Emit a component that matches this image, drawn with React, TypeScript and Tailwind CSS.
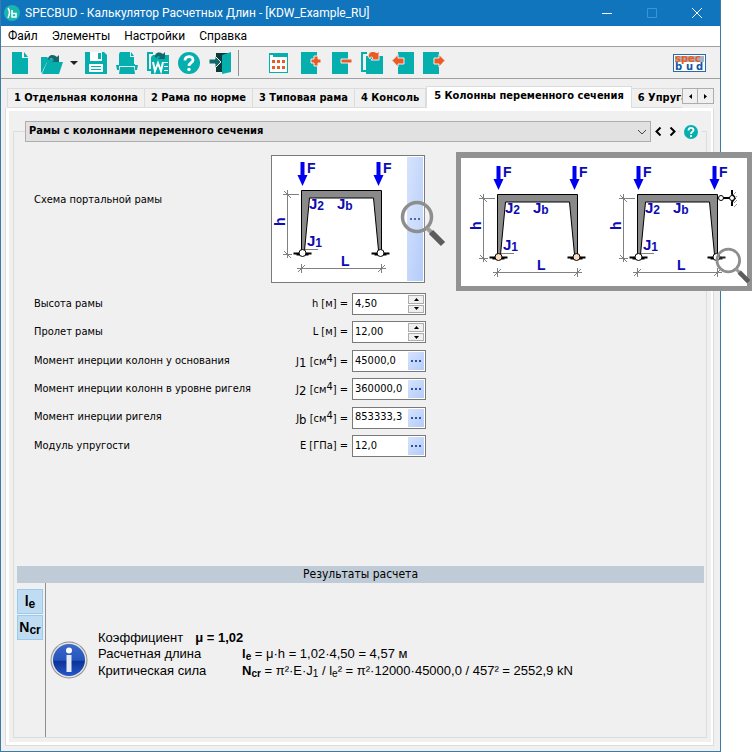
import { useState } from 'react';
import type { ReactNode } from 'react';

const TEAL = '#04afae';
const ORANGE = '#ee5a24';

const tabs = [
  '1 Отдельная колонна',
  '2 Рама по норме',
  '3 Типовая рама',
  '4 Консоль',
  '5 Колонны переменного сечения',
  '6 Упругая опора',
];

type Field = {
  id: string;
  label: string;
  symbol: ReactNode;
  value: string;
  spinner?: boolean;
};

const fields: Field[] = [
  { id: 'h', label: 'Высота рамы', symbol: 'h [м] =', value: '4,50', spinner: true },
  { id: 'l', label: 'Пролет рамы', symbol: 'L [м] =', value: '12,00', spinner: true },
  { id: 'j1', label: 'Момент инерции колонн у основания', symbol: <Inertia index="1" />, value: '45000,0' },
  { id: 'j2', label: 'Момент инерции колонн в уровне ригеля', symbol: <Inertia index="2" />, value: '360000,0' },
  { id: 'jb', label: 'Момент инерции ригеля', symbol: <Inertia index="b" />, value: '853333,3' },
  { id: 'e', label: 'Модуль упругости', symbol: 'E [ГПа] =', value: '12,0' },
];

function Inertia({ index }: { index: string }) {
  return (
    <>
      J<span className="relative top-0.5 text-[13px]">{index}</span> [см
      <span className="relative -top-[3px]">4</span>] =
    </>
  );
}

/* ---------- frame drawing ---------- */

function Load({ x }: { x: number }) {
  return (
    <>
      <path d={`M${x - 1.5} 7h4v13h3l-5 11-5-11h3z`} fill="#0000f0" />
      <text x={x + 5} y="18" fontSize="14">F</text>
    </>
  );
}

function Support({ x, fill }: { x: number; fill: string }) {
  return (
    <>
      <path d={`M${x - 9} 98.5h18M${x - 6} 99.5h12`} stroke="#000" strokeWidth="2" />
      <circle cx={x} cy="98" r="3.5" fill={fill} stroke="#000" />
    </>
  );
}

function PortalFrame({ hinge = '#fff' }: { hinge?: string }) {
  return (
    <g fill="#0b0bb4" fontFamily="Liberation Sans, sans-serif" fontWeight="bold">
      <Load x={31} />
      <Load x={107} />
      <path
        d="M30.5 35.5h80v60h-3l-5-52.500h-64l-5 52.500h-3z"
        fill="#8a8a8a"
        stroke="#000"
      />
      <Support x={31.5} fill={hinge} />
      <Support x={109.5} fill={hinge} />
      <g stroke="#808080" fill="none">
        <path d="M16.500 35v68M12 39.500h16M12 99.500h9M13 36l7 7M13 96l7 7" />
        <path d="M26 113.500h89M30.500 109v9M110.500 109v9M27 117l7-7M107 117l7-7" />
        <path d="M34 94.500h13" />
      </g>
      <text x="38" y="54" fontSize="15">J<tspan fontSize="12" dy="1">2</tspan></text>
      <text x="66" y="54" fontSize="15">J<tspan fontSize="12" dy="1">b</tspan></text>
      <text x="36" y="91" fontSize="15">J<tspan fontSize="12" dy="1">1</tspan></text>
      <text x="70" y="111" fontSize="14">L</text>
      <text x="-71" y="14" fontSize="14" transform="rotate(-90)">h</text>
    </g>
  );
}

function Magnifier({ className }: { className: string }) {
  return (
    <svg className={className} viewBox="0 0 46 47" aria-hidden="true">
      <circle cx="17" cy="17" r="14.5" fill="#fff" fillOpacity="0.15" stroke="#8e8e8e" strokeWidth="3.500" />
      <path d="M27 28l5 5" stroke="#9c9c9c" strokeWidth="4" />
      <path d="M31 32l12 12" stroke="#5c5c5c" strokeWidth="6" />
    </svg>
  );
}

/* ---------- toolbar ---------- */

function ToolButton({ label, width = 'w-[22px]', children }: { label: string; width?: string; children: ReactNode }) {
  return (
    <button type="button" aria-label={label} className={`${width} h-[22px] shrink-0`}>
      <svg className="h-[22px] w-full" viewBox={width === 'w-[16px]' ? '0 0 16 22' : '0 0 22 22'} fill={TEAL} aria-hidden="true">
        {children}
      </svg>
    </button>
  );
}

function HelpMark({ className }: { className: string }) {
  return (
    <svg className={className} viewBox="0 0 22 22" fill="none" aria-hidden="true">
      <circle cx="11" cy="11" r="11" fill={TEAL} />
      <path d="M7 8.500c0-5 8-5 8-.500 0 3-4 2.500-4 6" stroke="#fff" strokeWidth="2.800" />
      <circle cx="11" cy="17.500" r="1.700" fill="#fff" />
    </svg>
  );
}

function Toolbar() {
  return (
    <div className="flex h-8 items-center border-b border-[#a0a0a0] pl-[11px] pr-3.5">
      <ToolButton label="Новый" width="w-[16px]">
        <path d="M0 0h10v6h6v16H0zM12 0l4 5h-4z" />
      </ToolButton>
      <div className="ml-[13px] flex items-center">
        <ToolButton label="Открыть">
          <path d="M0 5h6l2 2h7v3H6L2 18l-1 3-1-1z" />
          <path d="M6 10h16l-4 12H1z" />
          <path d="M7 8c0-6 6-6 9-3l2-2v7h-7l2-2c-2-2-3-2-6 0z" fill="#13686b" />
        </ToolButton>
        <button type="button" aria-label="Последние файлы" className="ml-1.5 h-[22px] w-2.5">
          <svg className="h-[22px] w-2.5" viewBox="0 0 10 22" aria-hidden="true">
            <path d="M1 9h8l-4 4z" fill="#222" />
          </svg>
        </button>
      </div>
      <div className="ml-1.5 flex gap-[9px]">
        <ToolButton label="Сохранить">
          <path d="M0 0h19l3 3v19H0z" />
          <path d="M5 0h12v9H5zM4 12h14v8H4z" fill="#fff" />
          <path d="M13 1h3v6h-3zM6 14h10v1H6zM6 17h10v1H6z" />
        </ToolButton>
        <ToolButton label="Печать">
          <path d="M4 0h10v5h4v7H3V2zM15 0l3 4h-3zM3 12h16v2H3zM0 13h3v5H1zM22 13h-3v5h2zM4 15h14l1 7H3z" />
        </ToolButton>
        <ToolButton label="Экспорт в Word">
          <path d="M0 0h6v2H2v15h3v2H0zM6 3h16v19H4V5z" />
          <path d="M8 5c0-6 6-5 8-3l2-2v7h-7l2-2c-2-2-3-1-3 1z" fill="#13686b" />
          <path d="M6 10l2 9 3-8 3 8 2-9" fill="none" stroke="#fff" strokeWidth="2" />
          <path d="M17 10h4v1h-4zM17 14h4v1h-4zM17 18h4v1h-4z" fill="#fff" />
        </ToolButton>
        <button type="button" aria-label="Помощь" className="size-[22px]">
          <HelpMark className="size-[22px]" />
        </button>
        <ToolButton label="Выход">
          <path d="M7 1h15v19H7z" fill="#0d3b3a" />
          <path d="M13 3l9-3v20l-9 2z" />
          <path d="M0 7h6V4l6 6-6 6v-4H0z" fill="#13686b" stroke="#f0f0f0" />
        </ToolButton>
      </div>
      <div className="ml-[7px] h-[26px] w-px bg-[#909090]" />
      <div className="ml-[29px] flex gap-[9px]">
        <ToolButton label="Таблица">
          <path d="M1 1h19v20H1z" />
          <path d="M2 5h17v15H2zM2 3h3v2H2z" fill="#fff" />
          <path d="M4 8h3v3H4zM9 8h3v3H9zM14 8h3v3h-3zM4 14h3v3H4zM9 14h3v3H9zM14 14h3v3h-3z" fill={ORANGE} />
        </ToolButton>
        <ToolButton label="Добавить элемент">
          <path d="M2 0h16v22H2z" />
          <path d="M15 4h4v3h3v4h-3v3h-4v-3h-3V7h3z" fill={ORANGE} stroke="#f0f0f0" />
        </ToolButton>
        <ToolButton label="Удалить элемент">
          <path d="M2 0h16v22H2z" />
          <path d="M11 7h11v4H11z" fill={ORANGE} stroke="#f0f0f0" />
        </ToolButton>
        <ToolButton label="Копировать элемент">
          <path d="M0 0h6v2H2v16h3v2H0zM5 4h17v18H5z" />
          <path d="M7 4c1-6 7-5 9-3l2-2v9h-8l2-2c-2-2-3-1-3 1z" fill={ORANGE} stroke="#f0f0f0" />
        </ToolButton>
        <ToolButton label="Предыдущий элемент">
          <path d="M6 0h16v22H6z" />
          <path d="M0 8.500l6-6V6h6v6H6v3z" fill={ORANGE} stroke="#f0f0f0" />
        </ToolButton>
        <ToolButton label="Следующий элемент">
          <path d="M0 0h16v22H0z" />
          <path d="M22 8.500l-6-6V6h-5v6h5v3z" fill={ORANGE} stroke="#f0f0f0" />
        </ToolButton>
      </div>
      <a
        href="#specbud"
        aria-label="specbud"
        className="ml-auto block h-[18px] w-[33px] border border-[#2d68a8] bg-white"
      >
        <svg className="h-4 w-full" viewBox="0 0 31 16" fontFamily="DejaVu Sans, sans-serif" fontWeight="bold" fontSize="10" aria-hidden="true">
          <path d="M1 1h29v6H1z" fill="#a4b2c4" />
          <text x="1" y="7" fill="#e8601c">spec</text>
          <g fill="#1058a8">
            <text x="1" y="15">b</text>
            <text x="12" y="15">u</text>
            <text x="22" y="15">d</text>
          </g>
        </svg>
      </a>
    </div>
  );
}

/* ---------- form ---------- */

function MoreButton({ label }: { label: string }) {
  return (
    <button
      type="button"
      aria-label={label}
      className="flex h-full w-4 shrink-0 items-center justify-center gap-0.5 bg-linear-to-br from-[#d6e3fc] to-[#b4ccfa]"
    >
      <span className="size-0.5 bg-[#2a52a8]" />
      <span className="size-0.5 bg-[#2a52a8]" />
      <span className="size-0.5 bg-[#2a52a8]" />
    </button>
  );
}

function Spinner({ label }: { label: string }) {
  return (
    <div className="flex h-full w-4 shrink-0 flex-col gap-px">
      <button type="button" aria-label={`${label}: больше`} className="flex flex-1 items-center justify-center border border-[#adadad] bg-[#f0f0f0]">
        <svg className="h-[3px] w-[5px]" viewBox="0 0 5 3" aria-hidden="true"><path d="M0 3h5L2.500 0z" /></svg>
      </button>
      <button type="button" aria-label={`${label}: меньше`} className="flex flex-1 items-center justify-center border border-[#adadad] bg-[#f0f0f0]">
        <svg className="h-[3px] w-[5px]" viewBox="0 0 5 3" aria-hidden="true"><path d="M0 0h5L2.500 3z" /></svg>
      </button>
    </div>
  );
}

function FieldRow({ field }: { field: Field }) {
  const [value, setValue] = useState(field.value);

  return (
    <div className="flex h-[22px] items-center gap-1">
      <label htmlFor={field.id} className="flex w-[314px] items-center justify-between">
        <span>{field.label}</span>
        <span className="whitespace-pre">{field.symbol}</span>
      </label>
      <div className="flex h-[22px] w-[74px] border border-[#7a7a7a] bg-white p-px">
        <input
          id={field.id}
          type="text"
          value={value}
          onChange={(e) => setValue(e.target.value)}
          className="min-w-0 flex-1 pl-px outline-none"
        />
        {field.spinner ? <Spinner label={field.label} /> : <MoreButton label={field.label} />}
      </div>
    </div>
  );
}

function Sub({ children }: { children: ReactNode }) {
  return <span className="relative top-0.5 text-[10px]">{children}</span>;
}

function Results() {
  return (
    <section>
      <h2 className="ml-[3px] mr-0.5 h-[17px] bg-[#bfccd8] text-center text-[12px] leading-[17px]">Результаты расчета</h2>
      <div className="ml-[3px] flex h-[154px]">
        <div className="flex w-[29px] flex-col gap-px border-r border-[#909090] pt-1.5 font-['Liberation_Sans',sans-serif] text-[14px] font-bold">
          <button type="button" className="h-[25px] w-[26px] border border-[#99cbee] bg-[#c0dcf3] leading-[22px]">
            l<span className="relative top-0.5 text-[12px]">e</span>
          </button>
          <button type="button" className="h-[25px] w-[26px] border border-[#99cbee] bg-[#c0dcf3] leading-[22px]">
            N<span className="relative top-0.5 text-[12px]">cr</span>
          </button>
        </div>
        <div className="flex items-center gap-2.5 pl-1 font-['Liberation_Sans',sans-serif] text-[13px] leading-4">
          <svg className="size-[38px]" viewBox="0 0 38 38" aria-hidden="true">
            <defs>
              <linearGradient id="info" x1="0" y1="0" x2="0" y2="1">
                <stop offset="0" stopColor="#3c68c8" />
                <stop offset="0.5" stopColor="#2456bd" />
                <stop offset="0.55" stopColor="#0c3298" />
                <stop offset="1" stopColor="#2858cc" />
              </linearGradient>
            </defs>
            <circle cx="19" cy="19" r="18.500" fill="#8c8c8c" />
            <circle cx="19" cy="19" r="17.500" fill="#e4e4e4" />
            <circle cx="19" cy="19" r="16" fill="url(#info)" />
            <circle cx="19" cy="9.500" r="3" fill="#fff" />
            <rect x="16.500" y="14" width="5" height="17" fill="#e6e9f4" />
          </svg>
          <div className="pb-2.5">
            <p className="flex gap-3">
              <span>Коэффициент</span>
              <b>μ = 1,02</b>
            </p>
            <p className="flex">
              <span className="w-36">Расчетная длина</span>
              <span><b>l<Sub>e</Sub></b> = μ·h = 1,02·4,50 = 4,57 м</span>
            </p>
            <p className="flex">
              <span className="w-36">Критическая сила</span>
              <span>
                <b>N<Sub>cr</Sub></b> = π²·E·J<Sub>1</Sub> / l<Sub>e</Sub>² = π²·12000·45000,0 / 457² = 2552,9 kN
              </span>
            </p>
          </div>
        </div>
      </div>
    </section>
  );
}

export default function App() {
  const [active, setActive] = useState(4);

  return (
    <div className="relative flex min-h-screen bg-white pr-[31px] font-['DejaVu_Sans_Condensed','Noto_Sans',sans-serif] text-[11px] text-black">
      <main className="flex min-w-0 flex-1 flex-col border border-t-0 border-[#3a7ca8] bg-[#f0f0f0]">
        <header className="flex h-[26px] items-center bg-[#1075bc] pl-[3px] font-['Roboto',sans-serif] text-[12px] text-white">
          <svg className="size-4" viewBox="0 0 16 16" aria-hidden="true">
            <circle cx="8" cy="8" r="8" fill="#1cb5ae" />
            <path d="M4 3c2 3 2 6 0 10M8 5v7h4V8.500H8" fill="none" stroke="#fff" strokeWidth="1.500" />
          </svg>
          <h1 className="ml-[5px]">SPECBUD - Калькулятор Расчетных Длин - [KDW_Example_RU]</h1>
          <div className="ml-auto flex">
            <button type="button" aria-label="Свернуть" className="flex h-[26px] w-[45px] items-center justify-center">
              <svg className="size-2.5" viewBox="0 0 10 10" stroke="#fff" aria-hidden="true"><path d="M0 5.500h10" /></svg>
            </button>
            <button type="button" aria-label="Развернуть" disabled className="flex h-[26px] w-[45px] items-center justify-center">
              <svg className="size-2.5" viewBox="0 0 10 10" fill="none" stroke="#3f93d0" aria-hidden="true"><path d="M.5.5h9v9h-9z" /></svg>
            </button>
            <button type="button" aria-label="Закрыть" className="flex h-[26px] w-[46px] items-center justify-center">
              <svg className="size-2.5" viewBox="0 0 10 10" stroke="#fff" aria-hidden="true"><path d="M0 0l10 10M10 0L0 10" /></svg>
            </button>
          </div>
        </header>

        <nav className="flex h-[21px] items-center gap-3.5 border-b border-[#a0a0a0] bg-white pl-[7px] font-['Roboto',sans-serif] text-[12px]">
          <button type="button">Файл</button>
          <button type="button">Элементы</button>
          <button type="button">Настройки</button>
          <button type="button">Справка</button>
        </nav>

        <Toolbar />

        <div className="flex min-h-0 flex-1 flex-col pb-[5px] pl-1 pr-1.5 pt-[7px]">
          <div className="flex items-end pl-0.5">
            <div role="tablist" className="flex min-w-0 flex-1 items-end overflow-hidden">
              {tabs.map((tab, i) => (
                <button
                  key={tab}
                  type="button"
                  role="tab"
                  aria-selected={i === active}
                  onClick={() => setActive(i)}
                  className={
                    i === active
                      ? 'h-[22px] shrink-0 border border-b-0 border-[#dcdcdc] bg-white px-[7px] pb-0.5 font-bold whitespace-nowrap'
                      : 'h-[20px] shrink-0 border border-l-0 border-[#dcdcdc] px-1.5 font-bold whitespace-nowrap first:border-l'
                  }
                >
                  {tab}
                </button>
              ))}
            </div>
            <div className="mb-1 flex">
              <button type="button" aria-label="Вкладки влево" className="flex h-4 w-4 items-center justify-center border border-[#adadad] bg-[#f0f0f0]">
                <svg className="h-[5px] w-[3px]" viewBox="0 0 3 5" aria-hidden="true"><path d="M3 0v5L0 2.500z" /></svg>
              </button>
              <button type="button" aria-label="Вкладки вправо" className="flex h-4 w-4 items-center justify-center border border-l-0 border-[#adadad] bg-[#f0f0f0]">
                <svg className="h-[5px] w-[3px]" viewBox="0 0 3 5" aria-hidden="true"><path d="M0 0v5l3-2.500z" /></svg>
              </button>
            </div>
          </div>

          <div className="flex flex-1 border border-t-0 border-[#dcdcdc]">
            <div role="tabpanel" className="flex flex-1 flex-col border-[3px] border-r-2 border-white px-1 pb-1 pt-5">
              <div className="flex flex-1 flex-col border border-[#dcdcdc]">
                <div className="-mt-[11px] flex items-center pl-[11px]">
                  <div className="relative flex-1">
                    <select
                      aria-label="Тип рамы"
                      className="block h-[21px] w-full appearance-none border border-[#adadad] bg-[#e1e1e1] pl-[3px] font-bold outline-none"
                    >
                      <option>Рамы с колоннами переменного сечения</option>
                    </select>
                    <svg className="pointer-events-none absolute right-1 top-2 h-1.5 w-2.5" viewBox="0 0 10 6" fill="none" stroke="#444" aria-hidden="true">
                      <path d="M1 1l4 4 4-4" />
                    </svg>
                  </div>
                  <div className="flex h-[21px] items-center gap-[7px] bg-[#f0f0f0] pl-1 pr-0.5">
                    <button type="button" aria-label="Назад">
                      <svg className="h-[9px] w-[7px]" viewBox="0 0 7 9" fill="none" stroke="#000" strokeWidth="2" aria-hidden="true"><path d="M5.500.500l-4 4 4 4" /></svg>
                    </button>
                    <button type="button" aria-label="Вперед">
                      <svg className="h-[9px] w-[7px]" viewBox="0 0 7 9" fill="none" stroke="#000" strokeWidth="2" aria-hidden="true"><path d="M1.500.500l4 4-4 4" /></svg>
                    </button>
                  </div>
                  <button type="button" aria-label="Справка по разделу" className="ml-0.5 mr-1 bg-[#f0f0f0] px-1">
                    <HelpMark className="size-3.5" />
                  </button>
                </div>

                <div className="pl-5 pt-[13px]">
                  <div className="flex items-start">
                    <span className="mt-[37px] w-[237px]">Схема портальной рамы</span>
                    <div className="relative flex h-[128px] w-[154px] border border-[#7a7a7a] bg-white p-px">
                      <svg className="-m-0.5 h-[128px] w-[136px]" viewBox="0 0 136 128" role="img" aria-label="Портальная рама">
                        <PortalFrame />
                      </svg>
                      <div className="ml-auto flex">
                        <MoreButton label="Выбрать схему" />
                      </div>
                      <Magnifier className="pointer-events-none absolute left-32 top-11 h-[47px] w-[46px]" />
                    </div>
                  </div>
                  <div className="mt-2.5 flex h-[164px] flex-col justify-between">
                    {fields.map((field) => (
                      <FieldRow key={field.id} field={field} />
                    ))}
                  </div>
                </div>

                <div className="flex-1" />
                <Results />
              </div>
            </div>
          </div>
        </div>
      </main>

      <div className="absolute right-0 top-[152px] border-[5px] border-t-[6px] border-[#929292] bg-white">
        <svg className="h-[128px] w-[286px]" viewBox="0 0 286 128" role="img" aria-label="Варианты портальной рамы">
          <g transform="translate(6 1)">
            <PortalFrame hinge="#ffdcc0" />
          </g>
          <g transform="translate(146 1)">
            <PortalFrame />
            <path d="M116 39h10" stroke="#000" strokeWidth="2" />
            <path d="M125 31v4l3 4-3 4v4" fill="none" stroke="#000" strokeWidth="2" />
            <path d="M129 33l-3 3M130 37l-3 3M130 41l-3 3M130 45l-3 3" stroke="#999" />
            <circle cx="114" cy="39" r="2.500" fill="#fff" stroke="#000" />
            <circle cx="125" cy="39" r="2.500" fill="#fff" stroke="#000" />
          </g>
        </svg>
        <Magnifier className="pointer-events-none absolute -right-1 bottom-0.5 h-[37px] w-[36px]" />
      </div>
    </div>
  );
}
